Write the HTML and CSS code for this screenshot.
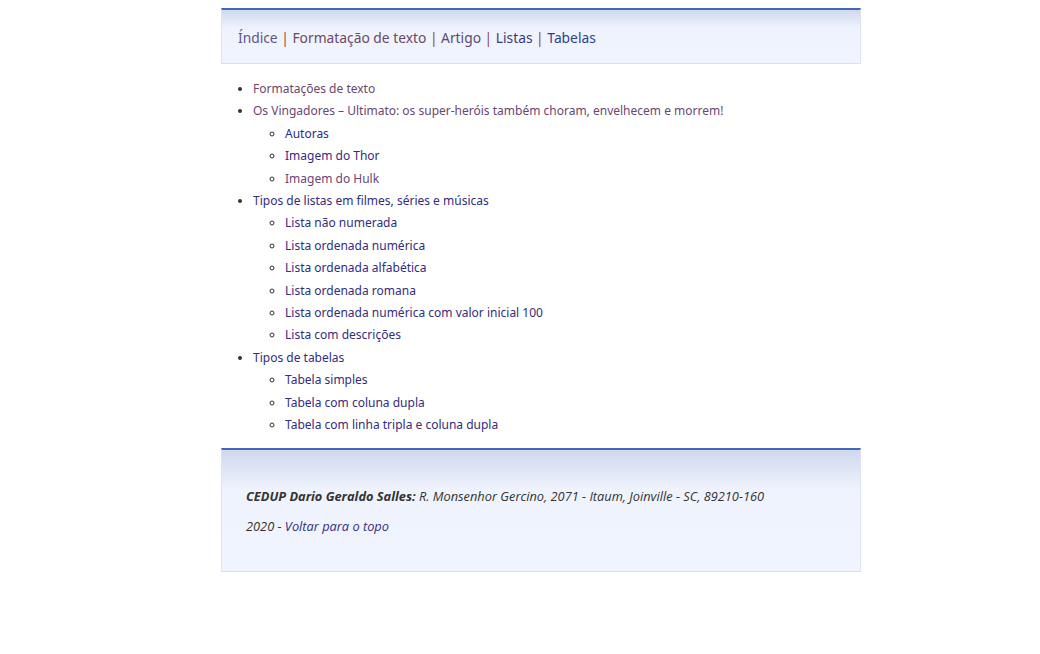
FILE: index.html
```html
<!DOCTYPE html>
<html lang="pt-BR">
<head>
<meta charset="utf-8">
<title>Índice</title>
<link rel="stylesheet" href="styles.css">
</head>
<body>
<div class="page">
  <header class="top">
    <nav class="menu">
      <a class="l1" href="#">Índice</a> <span class="sep">|</span>
      <a class="l2" href="#">Formatação de texto</a> <span class="sep">|</span>
      <a class="l3" href="#">Artigo</a> <span class="sep">|</span>
      <a class="l4" href="#">Listas</a> <span class="sep">|</span>
      <a class="l5" href="#">Tabelas</a>
    </nav>
  </header>
  <main class="content">
    <ul class="toc">
      <li><a class="c1" href="#">Formatações de texto</a></li>
      <li><a class="c1" href="#">Os Vingadores – Ultimato: os super-heróis também choram, envelhecem e morrem!</a>
        <ul>
          <li><a class="c2" href="#">Autoras</a></li>
          <li><a class="c2" href="#">Imagem do Thor</a></li>
          <li><a class="c1" href="#">Imagem do Hulk</a></li>
        </ul>
      </li>
      <li><a class="c2" href="#">Tipos de listas em filmes, séries e músicas</a>
        <ul>
          <li><a class="c2" href="#">Lista não numerada</a></li>
          <li><a class="c2" href="#">Lista ordenada numérica</a></li>
          <li><a class="c2" href="#">Lista ordenada alfabética</a></li>
          <li><a class="c2" href="#">Lista ordenada romana</a></li>
          <li><a class="c2" href="#">Lista ordenada numérica com valor inicial 100</a></li>
          <li><a class="c2" href="#">Lista com descrições</a></li>
        </ul>
      </li>
      <li><a class="c2" href="#">Tipos de tabelas</a>
        <ul>
          <li><a class="c2" href="#">Tabela simples</a></li>
          <li><a class="c2" href="#">Tabela com coluna dupla</a></li>
          <li><a class="c2" href="#">Tabela com linha tripla e coluna dupla</a></li>
        </ul>
      </li>
    </ul>
  </main>
  <footer class="bottom">
    <p class="addr"><strong>CEDUP Dario Geraldo Salles:</strong> R. Monsenhor Gercino, 2071 - Itaum, Joinville - SC, 89210-160</p>
    <p class="addr">2020 - <a class="c2" href="#">Voltar para o topo</a></p>
  </footer>
</div>
</body>
</html>
```
FILE: styles.css
```css
body {
  margin: 8px 0 0 0;
  background: #ffffff;
  font-family: "Noto Sans", "Open Sans", sans-serif;
  color: #333333;
}
a { text-decoration: none; }
.page {
  width: 640px;
  margin-left: 221px;
}
.top {
  border-top: 2px solid #4466bb;
  border-left: 1px solid #dde2f6;
  border-right: 1px solid #dde2f6;
  border-bottom: 1px solid #d9ddf6;
  background: linear-gradient(to bottom, #cfd8ee 0px, #eff3fd 18px, #eff4fd 100%);
  height: 51px;
  box-sizing: content-box;
  display: flex;
  align-items: center;
  padding: 2px 0 0 16px;
}
.menu {
  font-size: 13.8px;
  color: #555;
}
.sep { color: #8a4a3a; }
.l1 { color: #5e5585; }
.l2 { color: #6a4a66; }
.l3 { color: #5a4a7a; }
.l4 { color: #3a3a7a; }
.l5 { color: #2e3f8a; }
.content { padding: 14px 0 11px 0; }
.toc {
  margin: 0;
  padding-left: 32px;
  font-size: 12px;
  line-height: 22.4px;
  color: #333;
}
.toc ul {
  margin: 0;
  padding-left: 32px;
  list-style: circle;
}
.c1 { color: #6a4672; }
.c2 { color: #332c80; }
.bottom {
  border-top: 2px solid #4466bb;
  border-left: 1px solid #dde2f6;
  border-right: 1px solid #dde2f6;
  border-bottom: 1px solid #d9ddf6;
  background: linear-gradient(to bottom, #cfd8ee 0px, #eff3fd 40px, #eff4fd 100%);
  padding: 37px 24px 24px 24px;
  font-family: "Open Sans", sans-serif;
  font-style: italic;
  font-size: 12.8px;
  color: #333;
}
.addr { margin: 0 0 12px 0; line-height: 18px; }
.addr strong { font-weight: 700; }
```
